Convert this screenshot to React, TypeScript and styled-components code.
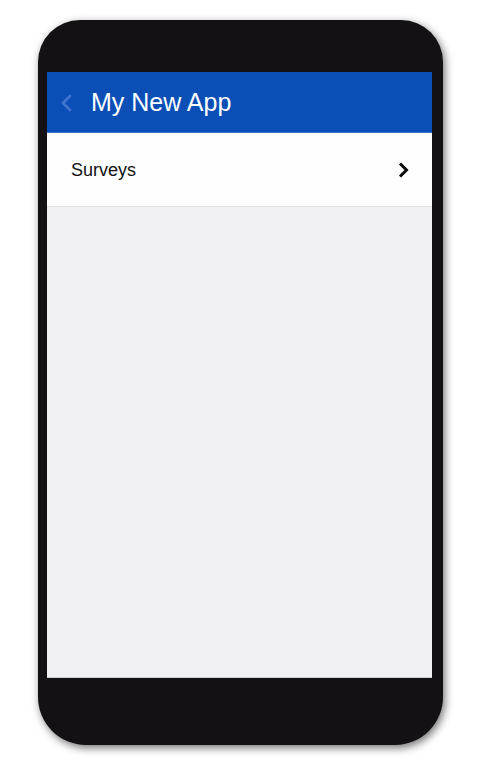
import React from "react";
import styled, { createGlobalStyle } from "styled-components";

const Global = createGlobalStyle`
  html, body { margin: 0; padding: 0; background: #ffffff; }
  body { font-family: "Liberation Sans", Arial, sans-serif; }
`;

const Page = styled.div`
  width: 480px;
  height: 771px;
  box-sizing: border-box;
  padding: 20px 0 0 38px;
  background: #ffffff;
`;

const Phone = styled.div`
  width: 405px;
  height: 725px;
  box-sizing: border-box;
  padding: 52px 11px 67px 9px;
  background: #141115;
  border-radius: 42px 42px 48px 48px;
  box-shadow: 2px 3px 8px rgba(0, 0, 0, 0.55);
  display: flex;
`;

const Screen = styled.div`
  flex: 1;
  display: flex;
  flex-direction: column;
  background: #f0eff2;
  border-bottom: 1px solid #cfcfd3;
  overflow: hidden;
`;

const Header = styled.header`
  height: 61px;
  box-sizing: border-box;
  background: #0b4fb6;
  border-bottom: 1px solid #3a74cc;
  display: flex;
  align-items: center;
  padding-left: 13px;
  padding-top: 1px;
  gap: 18px;
`;

const Title = styled.h1`
  margin: 0;
  font-size: 25px;
  font-weight: 400;
  color: #ffffff;
  line-height: 1;
`;

const Row = styled.div`
  height: 74px;
  box-sizing: border-box;
  background: #fefeff;
  border-bottom: 1px solid #e1e0e4;
  display: flex;
  align-items: center;
  justify-content: space-between;
  padding: 1px 23px 0 24px;
`;

const RowLabel = styled.span`
  font-size: 18px;
  color: #111111;
`;

const BackIcon = () => (
  <svg width="13" height="20" viewBox="0 0 13 20">
    <path d="M10 3 L3 10 L10 17" fill="none" stroke="#3f74cf" strokeWidth="2.6" strokeLinecap="round" strokeLinejoin="round" />
  </svg>
);

const ChevronIcon = () => (
  <svg width="12" height="16" viewBox="0 0 12 16">
    <path d="M3 1.5 L9.5 8 L3 14.5" fill="none" stroke="#0a0a0a" strokeWidth="3" strokeLinejoin="miter" />
  </svg>
);

export default function App() {
  return (
    <>
      <Global />
      <Page>
        <Phone>
          <Screen>
            <Header>
              <BackIcon />
              <Title>My New App</Title>
            </Header>
            <Row>
              <RowLabel>Surveys</RowLabel>
              <ChevronIcon />
            </Row>
          </Screen>
        </Phone>
      </Page>
    </>
  );
}
